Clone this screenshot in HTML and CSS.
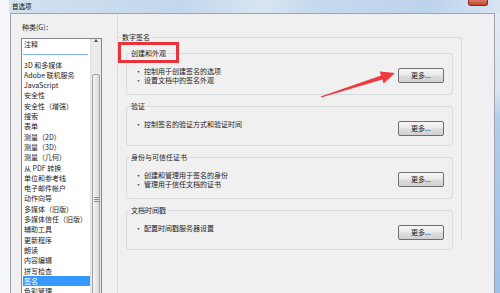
FILE: index.html
```html
<!doctype html>
<html>
<head>
   <meta charset="utf-8">
   <title>首选项</title>
   <link rel="stylesheet" href="styles.css">
</head>
<body>

   <div class="window">

      <div class="titlebar">
         <span class="title">首选项</span>
         <span class="close"></span>
      </div>

      <div class="frame">
         <div class="client">

            <div class="side">
               <div class="kind">种类(G)：</div>
               <div class="listbox">
                  <ul class="items">
                     <li>注释</li>
                     <li class="rule"></li>
                     <li>3D 和多媒体</li>
                     <li>Adobe 联机服务</li>
                     <li>JavaScript</li>
                     <li>安全性</li>
                     <li>安全性（增强）</li>
                     <li>搜索</li>
                     <li>表单</li>
                     <li>测量（2D）</li>
                     <li>测量（3D）</li>
                     <li>测量（几何）</li>
                     <li>从 PDF 转换</li>
                     <li>单位和参考线</li>
                     <li>电子邮件帐户</li>
                     <li>动作向导</li>
                     <li>多媒体（旧版）</li>
                     <li>多媒体信任（旧版）</li>
                     <li>辅助工具</li>
                     <li>更新程序</li>
                     <li>朗读</li>
                     <li>内容编辑</li>
                     <li>拼写检查</li>
                     <li class="sel">签名</li>
                     <li>色彩管理</li>
                  </ul>
                  <div class="scrollbar">
                     <div class="sb-up"><span class="tri"></span></div>
                     <div class="thumb"><span class="grip"></span></div>
                  </div>
               </div>
            </div>

            <div class="pane">
               <fieldset class="outer">
                  <legend>数字签名</legend>

                  <fieldset class="group">
                     <legend>创建和外观</legend>
                     <div class="row">
                        <ul class="bullets">
                           <li>控制用于创建签名的选项</li>
                           <li>设置文档中的签名外观</li>
                        </ul>
                        <button class="more">更多...</button>
                     </div>
                  </fieldset>

                  <fieldset class="group">
                     <legend>验证</legend>
                     <div class="row">
                        <ul class="bullets">
                           <li>控制签名的验证方式和验证时间</li>
                        </ul>
                        <button class="more">更多...</button>
                     </div>
                  </fieldset>

                  <fieldset class="group">
                     <legend>身份与可信任证书</legend>
                     <div class="row">
                        <ul class="bullets">
                           <li>创建和管理用于签名的身份</li>
                           <li>管理用于信任文档的证书</li>
                        </ul>
                        <button class="more">更多...</button>
                     </div>
                  </fieldset>

                  <fieldset class="group">
                     <legend>文档时间戳</legend>
                     <div class="row">
                        <ul class="bullets">
                           <li>配置时间戳服务器设置</li>
                        </ul>
                        <button class="more">更多...</button>
                     </div>
                  </fieldset>
               </fieldset>
            </div>

         </div>
         <div class="edge"></div>
      </div>

      <!-- annotation: red box and arrow drawn over the dialog -->
      <div class="mark"></div>
      <svg class="pointer" width="500" height="293" viewBox="0 0 500 293">
         <polygon points="321.3,97.6 382.3,79.4 383.6,83.4 395,73 379.7,71.4 381.1,75.4 320.8,96.6" fill="#ee3a3f"/>
      </svg>

   </div>

</body>
</html>
```

FILE: styles.css
```css
body{
   margin: 0;
   font-family: "Noto Sans CJK SC", "Noto Sans", sans-serif;
   font-size: 7px;
   color: #1b1b1b;
}

.window{
   position: relative;
   width: 500px;
   height: 293px;
   overflow: hidden;
   display: flex;
   flex-direction: column;
   background: #f4f6f9;
}

/* title bar */
.titlebar{
   flex: none;
   height: 13px;
   margin-left: 9px;
   display: flex;
   align-items: center;
   background: linear-gradient(100deg, #d3e1f0, #c3d7ec 35%, #d8e5f2 52%, #c6daee 62%, #bcd3ec 85%, #d9e5f1);
}

.title{
   margin-left: 3px;
   font-size: 6.5px;
   line-height: 13px;
   color: #111;
}

.close{
   align-self: flex-start;
   margin-left: auto;
   margin-right: 12px;
   width: 20px;
   height: 6px;
   box-sizing: border-box;
   border: 1px solid #7d2c20;
   border-top: none;
   border-radius: 0 0 3px 3px;
   background: linear-gradient(#d97a66, #c5442f);
}

.frame{
   flex: 1;
   min-height: 0;
   display: flex;
   padding-left: 10px;
}

.client{
   flex: 1;
   display: flex;
   background: #f0f0f0;
   border: 1px solid #9ba5af;
   border-bottom: none;
}

.edge{
   width: 5px;
   background: linear-gradient(#e2eaf3, #d9e4f0 28%, #b1cdea 38%, #9fc1e6);
}

/* left column */
.side{
   flex: none;
   width: 81px;
   padding-left: 10px;
}

.kind{
   margin: 8px 0 0 1px;
   line-height: 11px;
}

.listbox{
   box-sizing: border-box;
   width: 81px;
   height: 270px;
   margin-top: 5px;
   display: flex;
   border: 1px solid #828790;
   background: #fff;
}

.items{
   list-style: none;
   margin: 0;
   padding: 0;
   width: 68px;
   flex: none;
}

.items li{
   height: 10.3px;
   line-height: 10.3px;
   margin-left: 1px;
   padding-left: 1px;
   white-space: nowrap;
}

.items .rule{
   margin-right: 2px;
   background: linear-gradient(transparent 5px, #7fb2e8 5px, #7fb2e8 6px, transparent 6px);
}

.items .sel{
   background: #3399ff;
   color: #fff;
}

.scrollbar{
   flex: none;
   width: 11px;
   box-sizing: border-box;
   border-left: 1px solid #e2e2e2;
   background: #ebebeb;
   display: flex;
   flex-direction: column;
}

.sb-up{
   height: 11px;
   display: flex;
   align-items: center;
   justify-content: center;
}

.tri{
   width: 0;
   height: 0;
   border-left: 2.5px solid transparent;
   border-right: 2.5px solid transparent;
   border-bottom: 3px solid #555;
}

.thumb{
   flex: none;
   height: 240px;
   margin: 32px 1px 0;
   padding-top: 122px;
   box-sizing: border-box;
   border: 1px solid #9ca2a8;
   border-radius: 2px;
   background: linear-gradient(90deg, #f4f4f4, #dcdcdc);
   display: flex;
   justify-content: center;
   align-items: flex-start;
}

.grip{
   width: 5px;
   height: 5px;
   background: repeating-linear-gradient(#8a8e92 0 1px, transparent 1px 2px);
}

/* right column */
.pane{
   flex: 1;
   margin-left: 15px;
   border-left: 1px solid #d8dcdf;
}

fieldset{
   min-width: 0;
   margin: 0;
}

legend{
   line-height: 10px;
   padding: 0 1px;
}

.outer{
   box-sizing: border-box;
   width: 344px;
   height: 209px;
   margin-top: 18px;
   padding: 6px 8px 0;
   border: 1px solid #d8dcdf;
   border-left: none;
   border-bottom: none;
   border-radius: 0 3px 0 0;
}

.outer > legend{
   margin-left: -5px;
}

.group{
   margin-bottom: 6px;
   padding: 10px 8px 9px;
   border: 1px solid #d8dcdf;
   border-radius: 3px;
}

.group > legend{
   margin-left: -5px;
}

.row{
   display: flex;
   align-items: flex-start;
}

.bullets{
   flex: 1;
   list-style: none;
   margin: -1px 0 0;
   padding: 0;
   line-height: 9px;
}

.bullets li::before{
   content: "•";
   margin-right: 2px;
}

.more{
   flex: none;
   width: 46px;
   height: 15px;
   box-sizing: border-box;
   padding: 0;
   border: 1px solid #707070;
   border-radius: 2px;
   background: linear-gradient(#f5f5f5, #ebebeb 48%, #dddddd 52%, #d0d0d0);
   font: inherit;
   line-height: 13px;
   color: #1b1b1b;
}

/* annotation overlay */
.mark{
   position: absolute;
   left: 118px;
   top: 42px;
   width: 61px;
   height: 21px;
   box-sizing: border-box;
   border: 3px solid #e8333b;
}

.pointer{
   position: absolute;
   left: 0;
   top: 0;
}
```
